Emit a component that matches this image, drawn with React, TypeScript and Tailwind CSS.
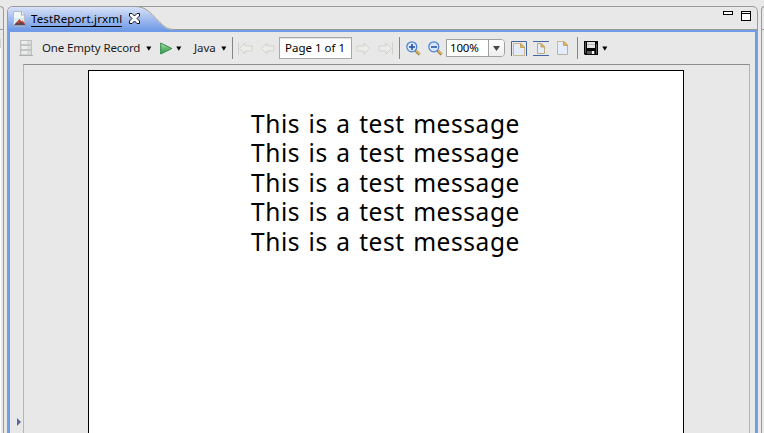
import React from "react";

const UI_FONT = "font-['Noto_Sans','Open_Sans',sans-serif]";

function Caret({ className = "" }: { className?: string }) {
  return (
    <svg className={`shrink-0 ${className}`} width="6" height="5" viewBox="0 0 6 5">
      <path d="M.3 .5H5.3L2.8 4.8Z" fill="#000" />
    </svg>
  );
}

function Separator({ className = "" }: { className?: string }) {
  return <div className={`h-[22px] w-px shrink-0 bg-[#858585] ${className}`} />;
}

function ReportIcon() {
  return (
    <svg width="13" height="16" viewBox="0 0 13 16" className="shrink-0">
      <path d="M.5 .5H8.5L11.5 4V15H.5Z" fill="#f0f6f5" stroke="#b3bec6" />
      <path d="M8.5 .5V4H11.5" fill="#fff" stroke="#9facb8" />
      <path d="M1 7H11V12H1Z" fill="#dcebec" />
      <path d="M2 13L6.5 8L8.5 10.5L9.5 9.5L12.5 13.5H2Z" fill="#c0403a" />
      <path d="M1 14L3.5 11.5L6 12.5L8 11L10 12L12.5 14Z" fill="#5c4650" />
      <path d="M0 14.5H13" stroke="#8ea2bd" />
    </svg>
  );
}

function CloseIcon() {
  return (
    <svg width="11" height="11" viewBox="0 0 11 11" className="ml-[7px] shrink-0">
      <path
        d="M.5 .5H3L5.5 3L8 .5H10.5V3L8 5.5L10.5 8V10.5H8L5.5 8L3 10.5H.5V8L3 5.5L.5 3Z"
        fill="#fff"
        stroke="#111"
      />
    </svg>
  );
}

function CabinetIcon() {
  return (
    <svg width="14" height="17" viewBox="0 0 14 17" className="ml-[9px] shrink-0">
      <path d="M1.5 .5H12.5V15H1.5Z" fill="#d9dddc" stroke="#bcc0bf" />
      <path d="M3 2.5H8M3 7.5H8M3 12.5H8" stroke="#eceeee" strokeWidth="3" />
      <path d="M2 5H12M2 10H12" stroke="#a9afad" />
      <path d="M0 15.5H14" stroke="#b0b2b1" />
    </svg>
  );
}

function NavArrow({ flip = false, bar = false, className = "" }: { flip?: boolean; bar?: boolean; className?: string }) {
  return (
    <svg
      width="15"
      height="13"
      viewBox="0 0 15 13"
      className={`shrink-0 ${flip ? "-scale-x-100" : ""} ${className}`}
    >
      {bar && <path d="M.5 .5V12.5" stroke="#d0d0cd" />}
      <path
        d="M1.5 6.5L7 1V4H14V9H7V12Z"
        fill="#ecece9"
        stroke="#d1d1cd"
        strokeLinejoin="round"
      />
    </svg>
  );
}

function Magnifier({ plus = false, className = "" }: { plus?: boolean; className?: string }) {
  return (
    <svg width="15" height="15" viewBox="0 0 15 15" className={`shrink-0 ${className}`}>
      <path d="M9.5 9.5L13.5 13.5" stroke="#9c7740" strokeWidth="2.6" />
      <path d="M10 9.5L13.5 13" stroke="#e6bd6b" strokeWidth="1.2" />
      <circle cx="5.8" cy="5.8" r="5" fill="#d6e6fd" stroke="#4c80cf" strokeWidth="1.2" />
      <path d="M3 6H9" stroke="#204da0" strokeWidth="1.5" />
      {plus && <path d="M6 3V9" stroke="#204da0" strokeWidth="1.5" />}
    </svg>
  );
}

function FitPageIcon() {
  return (
    <svg width="16" height="15" viewBox="0 0 16 15" className="ml-[6px] shrink-0">
      <path d="M.5 15V.5H15.5V15" fill="none" stroke="#4468a6" />
      <path d="M2.5 14.5V2.5H10L13.5 6V14.5Z" fill="#e4ebfb" stroke="#cbb888" />
      <path d="M9.5 2.5V6.5H13.5Z" fill="#e0b95f" stroke="#c6a45a" />
    </svg>
  );
}

function FitWidthIcon() {
  return (
    <svg width="16" height="15" viewBox="0 0 16 15" className="ml-[6px] shrink-0">
      <path d="M0 .5H16M0 14.5H16" stroke="#4468a6" />
      <path d="M4.5 2.5H8.5L11.5 5.5V12.5H4.5Z" fill="#e5ecfb" stroke="#bcaa80" />
      <path d="M8 2.5V6H11.5Z" fill="#e0b95f" stroke="#c6a45a" />
    </svg>
  );
}

function SheetIcon() {
  return (
    <svg width="11" height="14" viewBox="0 0 11 14" className="ml-[8px] shrink-0">
      <path d="M.5 .5H7L10.5 4V13.5H.5Z" fill="#e5ecfb" stroke="#b9b3a3" />
      <path d="M.5 9V.5H7L10.5 4" fill="none" stroke="#d3ba7e" />
      <path d="M6.5 .5V4.5H10.5Z" fill="#e0b95f" stroke="#c6a45a" />
    </svg>
  );
}

function FloppyIcon() {
  return (
    <svg width="14" height="14" viewBox="0 0 14 14" className="ml-[6px] shrink-0">
      <path d="M0 0H14V14H1L0 13Z" fill="#050505" />
      <path d="M3 1H11V7H3Z" fill="#e2e2e2" />
      <path d="M3 3.5H11" stroke="#b8b8b8" />
      <path d="M1.5 1V12M12.5 3V13" stroke="#666" strokeWidth=".8" />
      <path d="M3 10H11V13H3Z" fill="#555" />
      <path d="M8 10H10V13H8Z" fill="#f5f5f5" />
    </svg>
  );
}

function TabStrip() {
  return (
    <div className="relative h-[24px] shrink-0">
      <svg className="absolute left-0 top-0" width="751" height="24" viewBox="0 0 751 24">
        <defs>
          <linearGradient id="tab" x1="0" y1="0" x2="0" y2="1">
            <stop offset="0" stopColor="#d8e2f8" />
            <stop offset=".45" stopColor="#a9c1f0" />
            <stop offset="1" stopColor="#719be7" />
          </linearGradient>
        </defs>
        <path
          d="M.5 24V6Q.5 .5 6 .5H745Q750.5 .5 750.5 6V24"
          fill="#e8e8e8"
          stroke="#9b9b9b"
        />
        <path
          d="M1 24V6Q1 1 6 1H127C138 1 142 6 147 11L153 17C158 22 160 24 168 24Z"
          fill="url(#tab)"
        />
        <path
          d="M127 .5C138 .5 142 5.5 147 10.5L153 16.5C158 21.5 161 23.5 168 23.5H750"
          fill="none"
          stroke="#9b9b9b"
        />
      </svg>
      <div className="relative flex h-full pl-[6px] pr-[7px]">
        <div className="mt-[4px] flex h-[17px] items-center">
          <ReportIcon />
          <span className="ml-[5px] h-[16px] w-[91px] whitespace-nowrap border-b border-black text-[11.5px] leading-[15px] tracking-[0.15px] text-black">
            TestReport.jrxml
          </span>
          <CloseIcon />
        </div>
        <div className="ml-auto mt-[5px] flex items-start gap-[8px]">
          <div className="h-[4px] w-[10px] border border-black bg-white" />
          <div className="h-[10px] w-[10px] border border-black bg-white pt-px">
            <div className="h-px bg-black" />
          </div>
        </div>
      </div>
    </div>
  );
}

function Toolbar() {
  return (
    <div className="flex h-[32px] shrink-0 items-center text-[11.5px] text-[#1c1c1c]">
      <CabinetIcon />
      <span className="ml-[9px] w-[99px] whitespace-nowrap tracking-[-0.14px]">One Empty Record</span>
      <Caret className="ml-[5px]" />
      <svg width="13" height="13" viewBox="0 0 13 13" className="ml-[8px] shrink-0">
        <defs>
          <linearGradient id="play" x1="0" y1="0" x2="0" y2="1">
            <stop offset="0" stopColor="#b5dfb5" />
            <stop offset=".5" stopColor="#66b96d" />
            <stop offset="1" stopColor="#379a57" />
          </linearGradient>
        </defs>
        <path d="M.7 1L11.8 6.5L.7 12Z" fill="url(#play)" stroke="#2b8a4d" />
      </svg>
      <Caret className="ml-[3px]" />
      <span className="ml-[12px] w-[23px] whitespace-nowrap tracking-[-0.1px]">Java</span>
      <Caret className="ml-[4px]" />
      <Separator className="ml-[5px]" />
      <NavArrow bar className="ml-[5px]" />
      <NavArrow className="ml-[7px]" />
      <div className="ml-[4px] flex h-[22px] w-[73px] shrink-0 items-center whitespace-nowrap border border-[#a9a9a9] bg-white pl-[5px] text-black shadow-[inset_0_1px_1px_#ddd]">
        Page 1 of 1
      </div>
      <NavArrow flip className="ml-[4px]" />
      <NavArrow flip bar className="ml-[7px]" />
      <Separator className="ml-[6px]" />
      <Magnifier plus className="ml-[6px]" />
      <Magnifier className="ml-[7px]" />
      <div className="ml-[3px] flex h-[18px] w-[59px] shrink-0 overflow-hidden rounded-r-[4px] border border-[#a0a0a0] bg-white text-black">
        <span className="w-[41px] pl-[3px] leading-[16px] tracking-[-0.2px]">100%</span>
        <span className="flex grow items-center justify-center border-l border-[#a0a0a0] bg-linear-to-b from-white to-[#eee]">
          <svg width="7" height="5" viewBox="0 0 7 5">
            <path d="M0 0H7L3.5 5Z" fill="#484848" />
          </svg>
        </span>
      </div>
      <FitPageIcon />
      <FitWidthIcon />
      <SheetIcon />
      <Separator className="ml-[9px]" />
      <FloppyIcon />
      <Caret className="ml-[4px]" />
    </div>
  );
}

const MESSAGES = Array.from({ length: 5 }, () => "This is a test message");

export default function App() {
  return (
    <div className={`flex h-[433px] w-[764px] overflow-hidden bg-[#e8e8e8] pt-[6px] ${UI_FONT}`}>
      <div className="flex w-[4px] shrink-0 flex-col rounded-tr-[4px] border-r border-t border-[#9b9b9b]">
        <div className="h-[23px] border-b border-[#9b9b9b]" />
        <div className="h-[9px]" />
        <div className="h-[9px] w-px bg-[#d2d2d2]" />
        <div className="w-px grow bg-white" />
      </div>

      <div className="ml-[3px] flex w-[751px] shrink-0 flex-col">
        <TabStrip />
        <div className="flex grow flex-col border-x border-[#9b9b9b]">
          <div className="flex grow flex-col border-x-2 border-t-2 border-[#719be7]">
            <Toolbar />
            <div className="flex grow">
              <div className="flex w-[13px] shrink-0 items-end justify-end pb-[7px] pr-[2px]">
                <svg width="4" height="8" viewBox="0 0 4 8">
                  <path d="M0 0L4 4L0 8Z" fill="#6264a0" />
                </svg>
              </div>
              <div className="flex w-[727px] shrink-0 border-x border-t border-x-[#b5b5b5] border-t-[#8d8d8d] pl-[64px] pt-[5px]">
                <div className="w-[596px] border-x border-t border-black bg-white pl-[162px] pt-[37.7px] text-[24.5px] leading-[29.5px] tracking-[0.56px] text-black [word-spacing:1.6px]">
                  {MESSAGES.map((message, index) => (
                    <p key={index} className="whitespace-nowrap">{message}</p>
                  ))}
                </div>
              </div>
            </div>
          </div>
        </div>
      </div>

      <div className="ml-[3px] flex w-[6px] shrink-0 flex-col rounded-tl-[4px] border-l border-t border-[#9b9b9b]">
        <div className="h-[23px] border-b border-[#9b9b9b]" />
      </div>
    </div>
  );
}
